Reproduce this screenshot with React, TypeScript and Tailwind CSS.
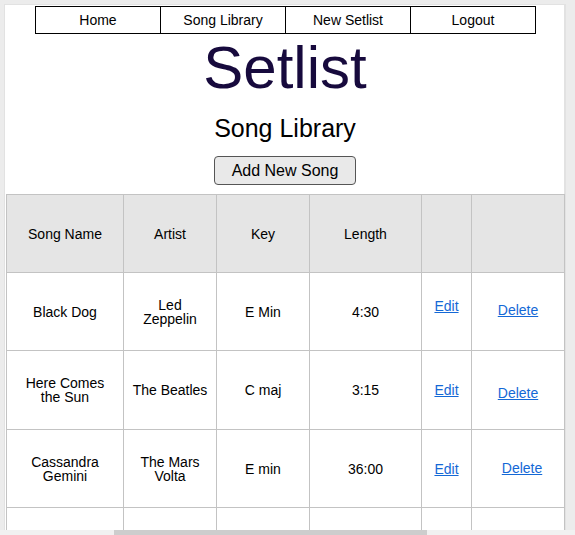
import React from "react";

const navItems = ["Home", "Song Library", "New Setlist", "Logout"];

type Row = {
  name: React.ReactNode;
  artist: React.ReactNode;
  keyName: string;
  length: string;
  editCls: string;
  deleteCls: string;
  h: string;
};

const rows: Row[] = [
  {
    name: "Black Dog",
    artist: (
      <>
        Led
        <br />
        Zeppelin
      </>
    ),
    keyName: "E Min",
    length: "4:30",
    editCls: "mb-[12px]",
    deleteCls: "mb-[4px]",
    h: "h-[78px]",
  },
  {
    name: (
      <>
        Here Comes
        <br />
        the Sun
      </>
    ),
    artist: "The Beatles",
    keyName: "C maj",
    length: "3:15",
    editCls: "",
    deleteCls: "mt-[6px]",
    h: "h-[79px]",
  },
  {
    name: (
      <>
        Cassandra
        <br />
        Gemini
      </>
    ),
    artist: (
      <>
        The Mars
        <br />
        Volta
      </>
    ),
    keyName: "E min",
    length: "36:00",
    editCls: "",
    deleteCls: "mb-[2px] ml-[8px]",
    h: "h-[78px]",
  },
];

const cell =
  "flex items-center justify-center text-center border-r border-b border-[#c3c3c3] text-[14px] leading-[14px] text-black";

export default function App() {
  return (
    <div
      className="relative w-[575px] h-[535px] overflow-hidden bg-[#ececec]"
      style={{ fontFamily: '"Liberation Sans", Arial, sans-serif' }}
    >
      <div className="ml-[4px] mt-[4px] w-[562px] h-[600px] bg-white border-l border-t border-r-2 border-[#e2e2e2] pl-[1px]">
        {/* nav */}
        <nav className="flex justify-center mt-[1px] pl-[1px]">
          <div className="flex border border-black">
            {navItems.map((n, i) => (
              <div
                key={n}
                className={`w-[124px] h-[26px] flex items-center justify-center text-[14px] text-black ${
                  i > 0 ? "border-l border-black w-[125px]" : ""
                }`}
              >
                {n}
              </div>
            ))}
          </div>
        </nav>

        <h1 className="mt-[4px] text-center text-[60px] leading-[60px] text-[#170a3d]">
          Setlist
        </h1>
        <h2 className="mt-[18px] text-center text-[25px] leading-[25px] text-black">
          Song Library
        </h2>
        <div className="flex justify-center mt-[15px]">
          <button className="h-[29px] w-[142px] flex items-center justify-center rounded-[4px] border border-[#555555] bg-[#e9e9e9] text-[16px] text-black">
            Add New Song
          </button>
        </div>

        {/* table */}
        <div className="mt-[9px] w-[559px] grid grid-cols-[117px_93px_93px_112px_50px_93px] border-l border-t border-[#c3c3c3]">
          {["Song Name", "Artist", "Key", "Length", "", ""].map((h, i) => (
            <div key={i} className={`${cell} h-[78px] bg-[#e5e5e5]`}>
              {h}
            </div>
          ))}
          {rows.map((r, i) => (
            <React.Fragment key={i}>
              <div className={`${cell} ${r.h}`}>{r.name}</div>
              <div className={`${cell} ${r.h}`}>{r.artist}</div>
              <div className={`${cell} ${r.h}`}>{r.keyName}</div>
              <div className={`${cell} ${r.h}`}>{r.length}</div>
              <div className={`${cell} ${r.h}`}>
                <a
                  href="#"
                  className={`inline-block underline text-[#1468d6] ${r.editCls}`}
                >
                  Edit
                </a>
              </div>
              <div className={`${cell} ${r.h}`}>
                <a
                  href="#"
                  className={`inline-block underline text-[#1468d6] ${r.deleteCls}`}
                >
                  Delete
                </a>
              </div>
            </React.Fragment>
          ))}
          {[0, 1, 2, 3, 4, 5].map((i) => (
            <div key={`e${i}`} className={`${cell} h-[78px]`} />
          ))}
        </div>
      </div>

      {/* horizontal scrollbar */}
      <div className="absolute left-0 bottom-0 w-[575px] h-[5px] bg-[#f1f1f1]">
        <div className="absolute left-[114px] top-0 h-[5px] w-[313px] bg-[#cdcdcd]" />
      </div>
    </div>
  );
}
